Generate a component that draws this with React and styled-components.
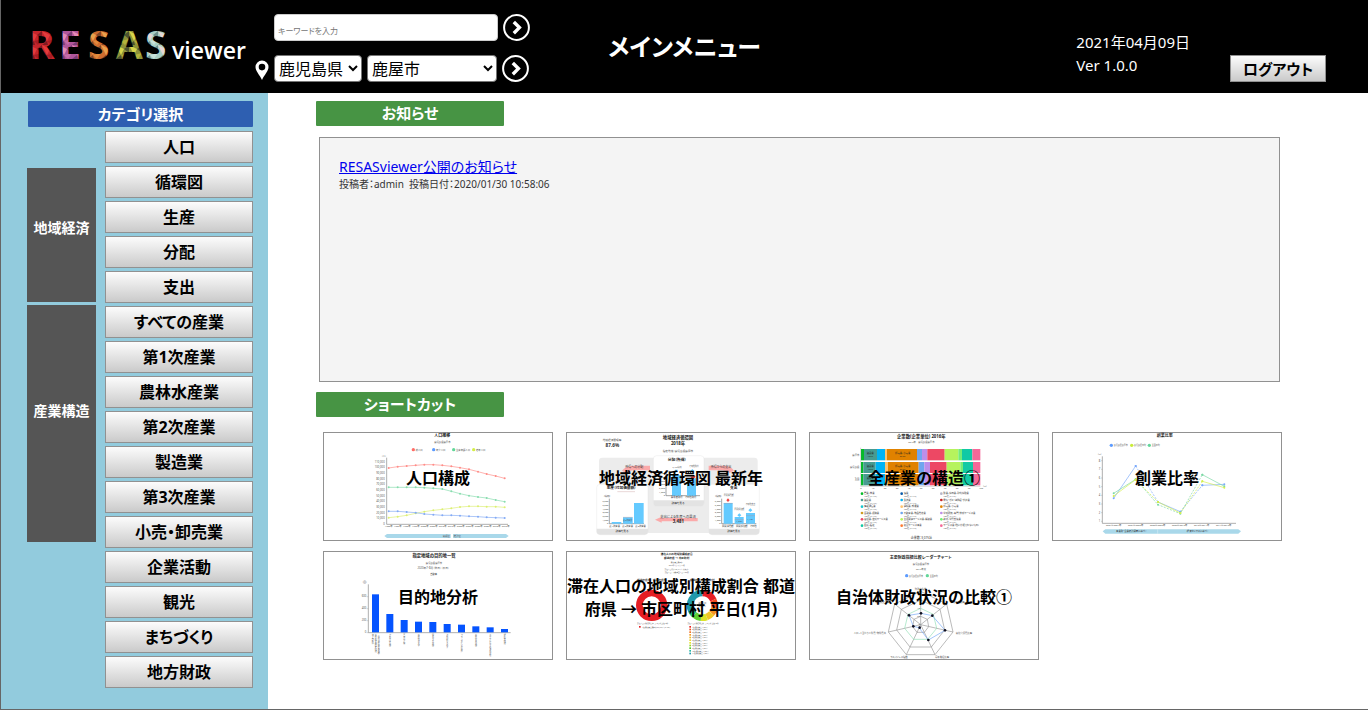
import React from "react";
import styled, { createGlobalStyle } from "styled-components";

const GlobalStyle = createGlobalStyle`
  *, *::before, *::after { box-sizing: border-box; }
  body {
    margin: 0;
    background: #fff;
    color: #000;
    font-family: "Noto Sans", "Noto Sans CJK JP", sans-serif;
    font-feature-settings: "palt";
    font-size: 16px;
  }
  button, input, select { font-family: inherit; font-feature-settings: inherit; }
`;

const Page = styled.div`
  display: flex;
  flex-direction: column;
  min-height: 100vh;
  border-left: 1px solid #666;
  border-bottom: 1px solid #666;
`;

const Header = styled.header`
  display: grid;
  grid-template-columns: 1fr auto 1fr;
  min-height: 93px;
  background: #000;
  color: #fff;
`;

const HeaderLeft = styled.div`
  display: flex;
  align-items: flex-start;
  padding: 14px 0 0 27px;
`;

const Logo = styled.svg`
  flex: none;
  width: 227px;
  height: 60px;
`;

const SearchForms = styled.div`
  display: flex;
  flex-direction: column;
  gap: 14px;
`;

const SearchRow = styled.form`
  display: flex;
  align-items: center;
  height: 27px;
  gap: 5px;
`;

const PinIcon = styled.svg`
  flex: none;
  width: 14px;
  height: 20px;
  margin: 2px 0 0;
  visibility: ${(p) => (p.$hidden ? "hidden" : "visible")};
`;

const Keyword = styled.input`
  width: 224px;
  height: 27px;
  padding: 5px 3px 0;
  border: 1px solid #ccc;
  border-radius: 4px;
  background: #fff;
  font-size: 8px;
  &::placeholder { color: #757575; }
`;

const Select = styled.select`
  width: ${(p) => p.$width}px;
  height: 27px;
  padding: 0;
  border: 1px solid #767676;
  border-radius: 4px;
  background: #fff;
  color: #000;
  font-size: 16px;
`;

const RoundButton = styled.button`
  display: block;
  flex: none;
  width: 27px;
  height: 27px;
  padding: 0;
  border: 0;
  background: none;
  svg { display: block; }
`;

const PageTitle = styled.h1`
  margin: 0;
  padding-top: 28px;
  font-size: 24px;
  line-height: 38px;
  white-space: nowrap;
`;

const HeaderRight = styled.div`
  display: flex;
  justify-content: flex-end;
  align-items: flex-start;
  gap: 40px;
  padding-right: 42px;
`;

const Version = styled.div`
  padding-top: 31px;
  font-size: 15px;
  line-height: 23px;
  white-space: nowrap;
`;

const GrayButton = styled.button`
  padding: 0;
  border: 1px solid #919191;
  background: linear-gradient(#fcfcfc, #cacaca);
  color: #000;
  font-size: 16px;
  font-weight: 700;
  line-height: 20px;
`;

const LogoutButton = styled(GrayButton)`
  width: 96px;
  height: 27px;
  margin-top: 55px;
  font-size: 15px;
`;

const Body = styled.div`
  display: flex;
  flex: 1;
`;

const Sidebar = styled.nav`
  flex: none;
  width: 267px;
  padding: 8px 15px 20px 26px;
  background: #92cbdd;
`;

const SidebarTitle = styled.h2`
  margin: 0 0 4px 1px;
  border-radius: 1px;
  background: #2e5fb1;
  color: #fff;
  font-size: 15px;
  line-height: 26px;
  text-align: center;
`;

const Categories = styled.div`
  display: flex;
  gap: 9px;
`;

const Groups = styled.div`
  display: flex;
  flex-direction: column;
  width: 69px;
  gap: 3px;
  padding-top: 37px;
`;

const Group = styled.div`
  display: flex;
  align-items: center;
  justify-content: center;
  height: ${(p) => p.$height}px;
  padding-bottom: ${(p) => p.$lift}px;
  background: #555;
  color: #fff;
  font-size: 14px;
  font-weight: 700;
`;

const CategoryList = styled.ul`
  display: flex;
  flex: 1;
  flex-direction: column;
  gap: 3px;
  margin: 0;
  padding: 0;
  list-style: none;
`;

const CategoryButton = styled(GrayButton)`
  display: block;
  width: 100%;
  height: 32px;
`;

const Main = styled.main`
  flex: 1;
  min-width: 0;
  padding: 8px 86px 20px 48px;
`;

const SectionTitle = styled.h2`
  width: 188px;
  margin: 0;
  border-radius: 1px;
  background: #479444;
  color: #fff;
  font-size: 15px;
  line-height: 25px;
  text-align: center;
`;

const News = styled.section`
  min-height: 245px;
  margin: 11px 2px 10px 3px;
  padding: 17px 19px;
  border: 1px solid #919191;
  background: #f4f4f4;
`;

const NewsLink = styled.a`
  color: #00e;
  font-size: 14px;
  line-height: 20px;
`;

const NewsMeta = styled.p`
  margin: 0;
  color: #333;
  font-size: 10px;
  line-height: 14px;
  white-space: pre;
`;

const Shortcuts = styled.div`
  display: grid;
  grid-template-columns: repeat(4, minmax(0, 1fr));
  gap: 10px 13px;
  margin: 15px 0 0 7px;
`;

const Card = styled.button`
  position: relative;
  display: flex;
  align-items: center;
  justify-content: center;
  height: 109px;
  padding: 0 0 16px;
  border: 1px solid #919191;
  background: #fff;
  color: #000;
`;

const Thumb = styled.svg`
  position: absolute;
  inset: -1px;
  width: calc(100% + 2px);
  height: 109px;
`;

const CardLabel = styled.span`
  position: relative;
  flex: none;
  max-width: calc(100% + 6px);
  font-size: 16px;
  font-weight: 700;
  line-height: 23px;
`;

/* Text inside a thumbnail chart; three drawing units make one pixel. */
const T = ({ x, y, s = 8, b, c = "#555", a = "middle", children, ...rest }) => (
  <text x={x} y={y} fontSize={s} fontWeight={b ? 700 : 400} fill={c} textAnchor={a} {...rest}>
    {children}
  </text>
);

const Line = ({ pts, color, width = 2, dash, dots = true }) => {
  const list = pts.split(" ").map((p) => p.split(","));
  return (
    <g>
      <polyline points={pts} fill="none" stroke={color} strokeWidth={width} strokeDasharray={dash} />
      {dots && list.map(([x, y]) => <circle key={x} cx={x} cy={y} r="3" fill={color} />)}
    </g>
  );
};

const Legend = ({ x, y, color, s = 6, children }) => (
  <g>
    <circle cx={x} cy={y} r="5" fill={color} />
    <T x={x + 7} y={y + 3} s={s} a="start">{children}</T>
  </g>
);

const PopulationChart = () => (
  <Thumb viewBox="39 21 690 327" aria-hidden="true">
    <T x={397} y={37} s={12} b c="#111">人口推移</T>
    <T x={397} y={54} s={7}>鹿児島県鹿屋市</T>
    <Legend x={310} y={74} color="#ff6d68" s={7}>総人口</Legend>
    <Legend x={371} y={74} color="#5c9bff" s={7}>年少人口</Legend>
    <Legend x={431} y={74} color="#63d69a" s={7}>生産年齢人口</Legend>
    <Legend x={491} y={74} color="#d4ee4a" s={7}>老年人口</Legend>
    <path d="M230 98V298H594" fill="none" stroke="#888" strokeWidth="2" />
    <T x={222} y={97} s={7}>（人）</T>
    {[..."abcdefghijkl"].map((k, i) => (
      <T key={k} x={224} y={300 - i * 17} s={8} a="end">{i ? `${i}0,000` : "0"}</T>
    ))}
    {[...Array(14)].map((_, i) => (
      <T key={i} x={236 + i * 27} y={306} s={7}>{`${1980 + i * 5}年`}</T>
    ))}
    <Line color="#ff8d88" pts="236,129 263,125 290,123 317,121 343,119 370,119 397,121 424,124 450,128 477,133 504,140 530,147 557,153 584,160" />
    <Line color="#86dcae" pts="236,187 263,187 290,187 317,187 343,188 370,190 397,192 424,199 450,206 477,212 504,216 530,219 557,225 584,230" />
    <Line color="#ddef72" pts="236,278 263,275 290,271 317,265 343,260 370,256 397,253 424,250 450,246 477,244 504,244 530,245 557,245 584,247" />
    <Line color="#83aaf5" pts="236,259 263,259 290,261 317,263 343,267 370,269 397,271 424,271 450,272 477,274 504,275 530,277 557,278 584,279" />
    <path d="M223 333l8-6h191v12H231zM596 333l-8-6H429v12h159z" fill="#a9d8ea" />
    <T x={409} y={336} s={7}>実績値</T>
    <T x={442} y={336} s={7}>推計値</T>
  </Thumb>
);

const CirculationChart = () => (
  <Thumb viewBox="18 21 690 327" aria-hidden="true">
    <rect x="117" y="98" width="476" height="226" rx="10" fill="#ececec" />
    <T x={156} y={48} s={8}>地域経済循環率</T>
    <T x={157} y={66} s={14} b c="#333">87.6%</T>
    <T x={354} y={42} s={13} b c="#222">地域経済循環図</T>
    <T x={354} y={61} s={13} b c="#222">2018年</T>
    <T x={354} y={80} s={8}>指定地域：鹿児島県鹿屋市</T>
    <path d="M186 137q12-16 42-15h42v14h-47q-15 0-22 10zM522 137q-10-16-36-15h-40v14h42q13 0 20 8z" fill="#fbaaaa" />
    <path d="M285 284l20-9v4h108v10H305v4z" fill="#fbaaaa" />
    <T x={223} y={129} s={9} c="#333">所得への分配</T>
    <T x={483} y={129} s={9} c="#333">所得からの支出</T>
    <rect x="280" y="92" width="152" height="152" rx="10" fill="#fff" stroke="#ddd" />
    <rect x="110" y="178" width="154" height="151" rx="10" fill="#fff" stroke="#ddd" />
    <rect x="446" y="178" width="152" height="151" rx="10" fill="#fff" stroke="#ddd" />
    <path d="M280 226h152v8q0 10-10 10H290q-10 0-10-10zM110 311h154v8q0 10-10 10H120q-10 0-10-10zM446 311h152v8q0 10-10 10H456q-10 0-10-10z" fill="#e3e3e3" />
    <T x={351} y={109} s={11} b c="#222">分配（所得）</T>
    <T x={184} y={193} s={11} b c="#222">生産（付加価値額）</T>
    <T x={521} y={193} s={11} b c="#222">支出</T>
    <path d="M318 136v76h102M148 221v75h104M485 221v75h104" fill="none" stroke="#777" strokeWidth="2" />
    <path d="M336 150h27v62h-27zM381 160h27v52h-27zM155 291h29v5h-29zM189 277h29v19h-29zM222 234h29v62h-29zM491 234h27v62h-27zM524 276h27v20h-27zM558 264h27v32h-27z" fill="#64caff" />
    <path d="M345 134h8v8h-8zM397 132l6 6-6 5-6-5zM538 265l6 6-6 5-6-5zM571 250l6 6-6 5-6-5z" fill="#64caff" />
    <path d="M391 155l15-3v5l-8 7zM504 220l5 6-5 5-5-5z" fill="#f24444" />
    <path d="M172 200h53M189 277h29M524 284h27M558 272h27M491 235h27" stroke="#b88" strokeWidth="1" />
    {[0, 1, 2, 3, 4, 5, 6].map((i) => (
      <g key={i}>
        <T x={145} y={298 - i * 11} s={7} a="end">{i ? `${i},000` : "0"}</T>
        <T x={482} y={298 - i * 11} s={7} a="end">{i ? `${i},000` : "0"}</T>
        <T x={315} y={214 - i * 11} s={7} a="end">{i ? `${i},000` : "0"}</T>
      </g>
    ))}
    <T x={141} y={217} s={7} c="#222">（億円）</T>
    <T x={475} y={217} s={7} c="#222">（億円）</T>
    <T x={351} y={129} s={6}>2,125億円</T>
    <T x={402} y={126} s={6}>その他所得</T>
    <T x={506} y={212} s={6}>民間消費額</T>
    <T x={538} y={254} s={6}>民間投資額</T>
    <T x={571} y={240} s={6}>その他支出</T>
    <T x={203} y={288} s={6}>第2次産業</T>
    <T x={538} y={292} s={7}>1,204</T>
    <T x={571} y={286} s={7}>1,431</T>
    <T x={371} y={220} s={7} c="#333">雇用者所得　その他所得</T>
    <T x={203} y={305} s={7} c="#333">第1次産業　第2次産業　第3次産業</T>
    <T x={538} y={305} s={7} c="#333">民間消費額　民間投資額　その他</T>
    <T x={354} y={237} s={8} c="#333">詳細を見る</T>
    <T x={186} y={322} s={8} c="#333">詳細を見る</T>
    <T x={521} y={322} s={8} c="#333">詳細を見る</T>
    <T x={354} y={279} s={10} c="#333">支出による生産への還流</T>
    <T x={355} y={295} s={13} b c="#222">3,481</T>
  </Thumb>
);

const industryRows = [
  [72, 34, [183, 192, 231, 255, 261, 351, 366, 382, 434, 475, 486, 517, 541]],
  [111, 33, [183, 190, 227, 255, 264, 356, 373, 390, 440, 481, 489, 519, 541]],
  [147, 34, [183, 190, 227, 255, 264, 356, 373, 390, 440, 481, 489, 519, 541]],
];
const industryColors = ["#05bb29", "#489b91", "#00b3f5", "#ffc36d", "#e08200", "#6fa6ef", "#bd8eea", "#ed4864", "#b6f35d", "#73ed76", "#11c9a5", "#f66898"];
const industryKey = [
  [186, 206, "#05bb29", "農業、林業"], [305, 206, "#0859aa", "漁業"], [424, 206, "#b6b6c8", "鉱業、採石業、砂利採取業"],
  [186, 225, "#489b91", "建設業"], [305, 225, "#00b3f5", "製造業"], [424, 225, "#c52525", "電気・ガス・熱供給・水道業"],
  [186, 245, "#18c7cf", "情報通信業"], [305, 245, "#ffc36d", "運輸業、郵便業"], [424, 245, "#e08200", "卸売業、小売業"],
  [186, 264, "#cf9b1f", "金融業、保険業"], [305, 264, "#6fa6ef", "不動産業、物品賃貸業"], [424, 264, "#bd8eea", "学術研究、専門・技術サービス業"],
  [186, 283, "#ed4864", "宿泊業、飲食サービス業"], [305, 283, "#b6f35d", "生活関連サービス業、娯楽業"], [424, 283, "#73ed76", "教育、学習支援業"],
  [186, 302, "#11c9a5", "医療、福祉"], [305, 302, "#ff7a32", "複合サービス事業"], [424, 302, "#f66898", "サービス業（他に分類されないもの）"],
];

const IndustryChart = () => (
  <Thumb viewBox="27 21 690 327" aria-hidden="true">
    <T x={364} y={38} s={13} b c="#222">企業数(企業単位) 2016年</T>
    <T x={364} y={54} s={7}>2016年　鹿児島県鹿屋市</T>
    {industryRows.map(([y, h, edges]) => (
      <g key={y}>
        {industryColors.map((color, i) => (
          <rect key={color} x={edges[i]} y={y} width={edges[i + 1] - edges[i]} height={h} fill={color} />
        ))}
        <T x={211} y={y + 15} s={7} c="#222">建設業</T>
        <T x={211} y={y + 24} s={6} c="#222">10.8%</T>
        <T x={308} y={y + 15} s={7} c="#222">卸売業、小売業</T>
        <T x={308} y={y + 24} s={6} c="#222">25.3%</T>
      </g>
    ))}
    <path d="M182 68V184H541" fill="none" stroke="#888" strokeWidth="1" />
    <T x={178} y={92} s={7} a="end">鹿屋市</T>
    <T x={178} y={129} s={7} a="end">鹿児島県</T>
    <T x={178} y={165} s={7} a="end">全国</T>
    {[...Array(11)].map((_, i) => <T key={i} x={183 + i * 36} y={191} s={7}>{i * 10}</T>)}
    <T x={555} y={186} s={7}>（%）</T>
    {industryKey.map(([x, y, color, name]) => (
      <g key={name}>
        <circle cx={x} cy={y} r="4" fill={color} />
        <T x={x + 6} y={y + 2} s={7} c="#333" a="start">{name}</T>
        <T x={x + 6} y={y + 11} s={6} a="start">102社 (3.41%)</T>
      </g>
    ))}
    <T x={364} y={343} s={9} c="#333">企業数：3,075社</T>
  </Thumb>
);

const StartupChart = () => (
  <Thumb viewBox="18 21 690 327" aria-hidden="true">
    <T x={356} y={37} s={12} b c="#222">創業比率</T>
    <Legend x={196} y={61} color="#5c9bff">鹿児島県鹿屋市</Legend>
    <Legend x={257} y={61} color="#c9ec3a">鹿児島県平均</Legend>
    <Legend x={310} y={61} color="#63d69a">全国平均</Legend>
    <path d="M169 94V295H570" fill="none" stroke="#888" strokeWidth="2" />
    <T x={161} y={90} s={7}>（%）</T>
    {[...Array(8)].map((_, i) => (
      <g key={i}>
        <path d={`M165 ${289 - i * 26}h4`} stroke="#888" />
        <T x={163} y={292 - i * 26} s={8} a="end">{i + 1}</T>
      </g>
    ))}
    {["2001～2004年", "2004～2006年", "2006～2009年", "2009～2012年", "2012～2014年", "2014～2016年"].map((t, i) => (
      <T key={t} x={203 + i * 66} y={304} s={7}>{t}</T>
    ))}
    <Line color="#79a9fa" pts="203,220 269,123" />
    <Line color="#79a9fa" dash="6 4" pts="269,123 336,231" />
    <Line color="#79a9fa" pts="336,231 403,260" />
    <Line color="#79a9fa" dash="6 4" pts="403,260 469,181" />
    <Line color="#79a9fa" pts="469,181 535,178" />
    <Line color="#7bd8a5" pts="203,205 269,163" />
    <Line color="#7bd8a5" dash="6 4" pts="269,163 336,239 403,266 469,149" />
    <Line color="#7bd8a5" pts="469,149 535,184" />
    <Line color="#d3ef4d" pts="203,213 269,164" />
    <Line color="#d3ef4d" dash="6 4" pts="269,164 336,231" />
    <Line color="#d3ef4d" pts="336,231 403,264" />
    <Line color="#d3ef4d" dash="6 4" pts="403,264 469,169" />
    <Line color="#d3ef4d" pts="469,169 535,188" />
    <path d="M170 319l8-6h399l8 6-8 7H178z" fill="#a9d8ea" />
    <path d="M335 313v13" stroke="#fff" />
    <T x={256} y={322} s={7} c="#333">事業所・企業統計調査に基づく</T>
    <T x={455} y={322} s={7} c="#333">経済センサスに基づく</T>
  </Thumb>
);

const destinationBars = [
  [148, "鹿屋航空基地史料館"], [207, "かのやばら園"], [225, "吾平山上陵"], [230, "鹿屋体育大学"], [231, "霧島ヶ丘公園"],
  [237, "道の駅たるみず"], [239, "プラッセだいわ鹿屋"], [244, "鹿屋中央公園"], [247, "ユクサおおすみ海の学校"], [252, "輝北天球館"],
];

const DestinationChart = () => (
  <Thumb viewBox="39 18 690 327" aria-hidden="true">
    <T x={372} y={37} s={13} b c="#222">指定地域の目的地一覧</T>
    <T x={372} y={56} s={7}>鹿児島県鹿屋市</T>
    <T x={370} y={73} s={8}>2020年7・8月（休日）（平日）</T>
    <T x={371} y={89} s={7} c="#333">自動車</T>
    <path d="M175 118V263H602" fill="none" stroke="#888" strokeWidth="2" />
    <T x={164} y={113} s={7}>（回）</T>
    {[0, 200, 400, 600].map((n, i) => (
      <g key={n}>
        <path d={`M170 ${263 - i * 36}h5`} stroke="#888" />
        <T x={169} y={265 - i * 36} s={8} a="end">{n}</T>
      </g>
    ))}
    {destinationBars.map(([top, name], i) => (
      <g key={name}>
        <rect x={186 + i * 43} y={top} width="21" height={262 - top} fill="#0554ff" />
        <T x={197 + i * 43} y={267} s={6} a="start" style={{ writingMode: "vertical-rl" }}>{name}</T>
      </g>
    ))}
    <T x={206} y={267} s={6} a="start" style={{ writingMode: "vertical-rl" }}>（鹿児島県鹿屋市西原）</T>
    <T x={188} y={267} s={6} a="start" style={{ writingMode: "vertical-rl" }}>海上自衛隊</T>
  </Thumb>
);

const ringColors = ["#e92020", "#f04a20", "#f27422", "#f39a24", "#f1b928", "#ecd52d", "#e6e52c", "#99d52c", "#51cd31", "#28b7a4", "#2099af"];

const StayChart = () => (
  <Thumb viewBox="18 18 690 327" aria-hidden="true">
    <T x={350} y={31} s={8} b c="#222">滞在人口の地域別構成割合</T>
    <T x={350} y={43} s={8} b c="#222">都道府県 → 市区町村</T>
    <T x={350} y={54} s={5}>鹿児島県鹿屋市</T>
    <T x={350} y={64} s={5}>2019年1月 平日 14時</T>
    <T x={350} y={74} s={5}>滞在人口合計：98,441人（男女計）</T>
    <T x={350} y={83} s={5}>滞在人口／国勢調査人口：1.06倍</T>
    <T x={275} y={107} s={8} b c="#444">都道府県内／都道府県外</T>
    <T x={427} y={107} s={8} b c="#444">都道府県内 市区町村</T>
    <circle cx="275" cy="181" r="37" fill="none" stroke="#e51e24" strokeWidth="20" />
    <g fill="none" strokeWidth="20">
      <path d="M427 144A37 37 0 0 1 460 165" stroke="#e51e24" />
      <path d="M460 165A37 37 0 0 1 464 188" stroke="#ef4b20" />
      <path d="M464 188A37 37 0 0 1 455 205" stroke="#f59322" />
      <path d="M455 205A37 37 0 0 1 440 216" stroke="#f1c628" />
      <path d="M440 216A37 37 0 0 1 423 218" stroke="#dde329" />
      <path d="M423 218A37 37 0 0 1 403 209" stroke="#5fd034" />
      <path d="M403 209A37 37 0 0 1 395 199" stroke="#25c17b" />
      <path d="M395 199A37 37 0 0 1 427 144" stroke="#2199ac" />
    </g>
    <T x={427} y={178} s={6}>滞在人口</T>
    <T x={427} y={187} s={6}>8,526人</T>
    <T x={278} y={236} s={5}>滞在人口の都道府県内ランキング 上位10件</T>
    <T x={429} y={236} s={5}>滞在人口の都道府県外ランキング 上位10件</T>
    <rect x="237" y="243" width="5" height="5" fill="#e51e24" />
    <T x={246} y={248} s={5} a="start">1位 鹿児島県鹿屋市 89,915人 (91.3%)</T>
    {ringColors.map((color, i) => (
      <g key={color}>
        <rect x="388" y={243 + i * 8} width="5" height="5" fill={color} />
        <T x={396} y={248 + i * 8} s={5} a="start">{`${i + 1}位 鹿児島県 1,204人`}</T>
      </g>
    ))}
  </Thumb>
);

const heptagon = (r) =>
  [...Array(7)]
    .map((_, i) => {
      const t = (i * 2 * Math.PI) / 7;
      return `${Math.round(362 + r * Math.sin(t))},${Math.round(239 - r * Math.cos(t))}`;
    })
    .join(" ");

const RadarChart = () => (
  <Thumb viewBox="27 18 690 327" aria-hidden="true">
    <T x={362} y={42} s={12} b c="#222">主要財政指標比較レーダーチャート</T>
    <T x={363} y={60} s={7}>鹿児島県鹿屋市</T>
    <T x={363} y={74} s={7}>2017年度</T>
    <Legend x={320} y={92} color="#5c9bff">鹿児島県鹿屋市</Legend>
    <Legend x={382} y={92} color="#63d69a">全国平均</Legend>
    <g fill="none" stroke="#999" strokeWidth="2">
      {[25, 74, 100].map((r) => <polygon key={r} points={heptagon(r)} />)}
      {heptagon(100).split(" ").map((p) => <path key={p} d={`M362 239L${p}`} />)}
    </g>
    <polygon points={heptagon(49)} fill="none" stroke="#93dfb6" strokeWidth="2" />
    <polygon points="363,205 397,212 435,256 385,285 357,248 340,244 327,211" fill="none" stroke="#72a7f8" strokeWidth="2" />
    <g fill="#112">
      {[[363, 205], [397, 212], [435, 256], [385, 285], [359, 248], [340, 244], [327, 211]].map(([x, y]) => (
        <circle key={x} cx={x} cy={y} r="4" />
      ))}
    </g>
    <T x={362} y={134} s={7}>財政力指数</T>
    <T x={268} y={175} s={7} a="end">実質収支比率</T>
    <T x={452} y={175} s={7} a="start">経常収支比率</T>
    <T x={258} y={266} s={7} a="end">人口1人当たり人件費・物件費等</T>
    <T x={467} y={266} s={7} a="start">実質公債費比率</T>
    <T x={297} y={338} s={7}>ラスパイレス指数</T>
    <T x={426} y={338} s={7}>将来負担比率</T>
    {[0, 20, 40, 60, 80].map((n, i) => <T key={n} x={360} y={241 - i * 25} s={7} a="end">{n}</T>)}
  </Thumb>
);

const Arrow = ({ label }) => (
  <RoundButton type="button" aria-label={label}>
    <svg width="27" height="27" viewBox="0 0 27 27" fill="none" stroke="#fff">
      <circle cx="13.5" cy="13.5" r="12.4" strokeWidth="2" />
      <path d="M10.8 8l5.6 5.6-5.6 5.6" strokeWidth="3.4" />
    </svg>
  </RoundButton>
);

const Pin = ({ hidden }) => (
  <PinIcon viewBox="0 0 14 20" aria-hidden="true" $hidden={hidden}>
    <path
      d="M7 .5a6.5 6.5 0 0 0-6.5 6.6C.5 11 4.600 15 7 20c2.400-5 6.500-9 6.500-12.900A6.500 6.500 0 0 0 7 .5zm0 3.300a3.300 3.300 0 1 1 0 6.600 3.300 3.300 0 0 1 0-6.600z"
      fill="#fff"
      fillRule="evenodd"
    />
  </PinIcon>
);

const logoLetters = [
  ["R", 1, ["#c4252c", "#e33b3c", "#7e1a20", "#a51d25"]],
  ["E", 31, ["#b0569b", "#e58bb4", "#7a3d76", "#c46ba8"]],
  ["S", 60, ["#cf6c2f", "#e8a14c", "#7d4628", "#e08a3c"]],
  ["A", 88, ["#8d9138", "#d5d44a", "#4c5230", "#b4b43b"]],
  ["S", 117, ["#a9cfc4", "#e6d8d4", "#6c8f8b", "#c8e2da"]],
];

const SiteLogo = () => (
  <Logo viewBox="0 0 227 60" role="img" aria-label="RESAS viewer">
    <defs>
      {logoLetters.map(([, x, [base, light, dark, mid]], i) => (
        <pattern key={x} id={`facet${i}`} x={x} y="17" width="13" height="14" patternUnits="userSpaceOnUse">
          <rect width="13" height="14" fill={base} />
          <path d="M0 0l8 4-3 6z" fill={light} />
          <path d="M8 4l5-4v8z" fill={dark} />
          <path d="M5 10l8-2-4 6z" fill={mid} />
          <path d="M0 14l5-4 1 4z" fill={dark} />
        </pattern>
      ))}
    </defs>
    {logoLetters.map(([letter, x], i) => (
      <text key={x} x={x} y="45" fontFamily="'Open Sans', sans-serif" fontWeight="700" fontSize="39" fill={`url(#facet${i})`}>
        {letter}
      </text>
    ))}
    <text x="144" y="45" fontFamily="'Open Sans', sans-serif" fontWeight="600" fontSize="23" fill="#fff">viewer</text>
  </Logo>
);

const categories = [
  "人口", "循環図", "生産", "分配", "支出", "すべての産業", "第1次産業", "農林水産業",
  "第2次産業", "製造業", "第3次産業", "小売・卸売業", "企業活動", "観光", "まちづくり", "地方財政",
];

const shortcuts = [
  ["人口構成", PopulationChart],
  ["地域経済循環図 最新年", CirculationChart],
  ["全産業の構造①", IndustryChart],
  ["創業比率", StartupChart],
  ["目的地分析", DestinationChart],
  ["滞在人口の地域別構成割合 都道府県 → 市区町村 平日(1月)", StayChart],
  ["自治体財政状況の比較①", RadarChart],
];

export default function App() {
  return (
    <>
      <GlobalStyle />
      <Page lang="ja">
        <Header>
          <HeaderLeft>
            <SiteLogo />
            <SearchForms>
              <SearchRow>
                <Pin hidden />
                <Keyword type="text" placeholder="キーワードを入力" aria-label="キーワード" />
                <Arrow label="検索" />
              </SearchRow>
              <SearchRow>
                <Pin />
                <Select $width={88} aria-label="都道府県" defaultValue="鹿児島県">
                  <option>鹿児島県</option>
                </Select>
                <Select $width={130} aria-label="市区町村" defaultValue="鹿屋市">
                  <option>鹿屋市</option>
                </Select>
                <Arrow label="地域を表示" />
              </SearchRow>
            </SearchForms>
          </HeaderLeft>
          <PageTitle>メインメニュー</PageTitle>
          <HeaderRight>
            <Version>
              <div>2021年04月09日</div>
              <div>Ver 1.0.0</div>
            </Version>
            <LogoutButton type="button">ログアウト</LogoutButton>
          </HeaderRight>
        </Header>
        <Body>
          <Sidebar>
            <SidebarTitle>カテゴリ選択</SidebarTitle>
            <Categories>
              <Groups>
                <Group $height={134} $lift={16}>地域経済</Group>
                <Group $height={237} $lift={28}>産業構造</Group>
              </Groups>
              <CategoryList>
                {categories.map((name) => (
                  <li key={name}>
                    <CategoryButton type="button">{name}</CategoryButton>
                  </li>
                ))}
              </CategoryList>
            </Categories>
          </Sidebar>
          <Main>
            <SectionTitle>お知らせ</SectionTitle>
            <News>
              <NewsLink href="#news">RESASviewer公開のお知らせ</NewsLink>
              <NewsMeta>投稿者：admin  投稿日付：2020/01/30 10:58:06</NewsMeta>
            </News>
            <SectionTitle>ショートカット</SectionTitle>
            <Shortcuts>
              {shortcuts.map(([label, Chart]) => (
                <Card key={label} type="button">
                  <Chart />
                  <CardLabel>{label}</CardLabel>
                </Card>
              ))}
            </Shortcuts>
          </Main>
        </Body>
      </Page>
    </>
  );
}
